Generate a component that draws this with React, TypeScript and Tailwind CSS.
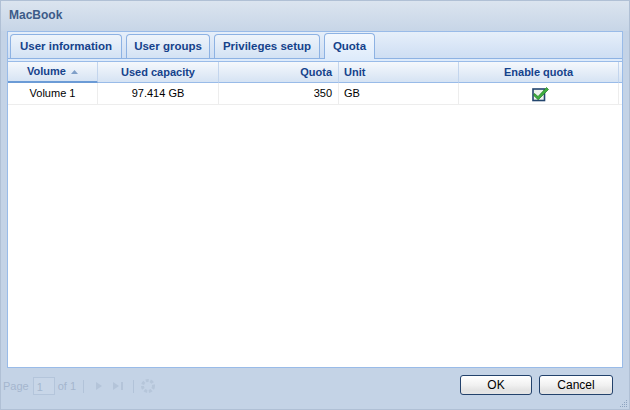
import React from 'react';

const tabs = [
  { label: 'User information', w: 'w-[112px]' },
  { label: 'User groups', w: 'w-[84px]' },
  { label: 'Privileges setup', w: 'w-[106px]' },
];

function CheckIcon() {
  return (
    <svg width="17" height="16" viewBox="0 0 17 16" className="block">
      <rect x="1" y="3" width="11.5" height="11.5" fill="#eef3ee" stroke="#23456e" strokeWidth="1.6" />
      <path d="M2.5 7.5 L6 10.5 L14.5 1.5 L16.5 3.5 L6.2 13.8 L1.5 9.3 Z" fill="#3fae3f" stroke="#1e7a1e" strokeWidth="0.7" strokeLinejoin="round" />
    </svg>
  );
}

function GridHeader() {
  return (
    <div className="flex h-[21px] text-[11px] font-bold text-[#15428b] bg-gradient-to-b from-[#f5f8fc] to-[#d4e2f3]">
      <div className="w-[90px] flex items-center justify-center gap-[5px] border-b-2 border-[#6b9bd6] border-r border-r-[#c3d5ed]">
        <span>Volume</span>
        <svg width="7" height="4" viewBox="0 0 7 4"><path d="M0 4 L3.5 0 L7 4 Z" fill="#7f9fc8" /></svg>
      </div>
      <div className="w-[121px] flex items-center justify-center border-b border-[#99bbe8] border-r border-r-[#c3d5ed]">Used capacity</div>
      <div className="w-[120px] flex items-center justify-end pr-[6px] border-b border-[#99bbe8] border-r border-r-[#c3d5ed]">Quota</div>
      <div className="w-[120px] flex items-center pl-[5px] border-b border-[#99bbe8] border-r border-r-[#c3d5ed]">Unit</div>
      <div className="w-[160px] flex items-center justify-center border-b border-[#99bbe8] border-r border-r-[#c3d5ed]">Enable quota</div>
      <div className="flex-1 border-b border-[#99bbe8]" />
    </div>
  );
}

function GridRow() {
  return (
    <div className="flex h-[22px] text-[11px] text-black border-b border-[#ededed]">
      <div className="w-[90px] flex items-center justify-center border-r border-[#ededed]">Volume 1</div>
      <div className="w-[121px] flex items-center justify-center border-r border-[#ededed]">97.414 GB</div>
      <div className="w-[120px] flex items-center justify-end pr-[6px] border-r border-[#ededed]">350</div>
      <div className="w-[120px] flex items-center pl-[5px] border-r border-[#ededed]">GB</div>
      <div className="w-[160px] flex items-center justify-center pl-[4px] border-r border-[#ededed]">
        <CheckIcon />
      </div>
      <div className="flex-1" />
    </div>
  );
}

function Pager() {
  return (
    <div className="flex items-center h-[20px] text-[11px] text-[#a4b6ce]">
      <span>Page</span>
      <div className="ml-[4px] w-[22px] h-[18px] border border-[#b4c5db] bg-[#c8d6e8] pl-[3px] pt-[2px] leading-[14px]">1</div>
      <span className="ml-[3px]">of 1</span>
      <div className="ml-[7px] w-px h-[13px] bg-[#b2c3d9]" />
      <svg className="ml-[10px]" width="10" height="10" viewBox="0 0 10 10"><path d="M2 1 L8 5 L2 9 Z" fill="#b4c4d9" /></svg>
      <svg className="ml-[8px]" width="12" height="10" viewBox="0 0 12 10"><path d="M1 1 L7 5 L1 9 Z" fill="#b4c4d9" /><rect x="9" y="1" width="2" height="8" fill="#b4c4d9" /></svg>
      <div className="ml-[9px] w-px h-[13px] bg-[#b2c3d9]" />
      <svg className="ml-[6px]" width="16" height="16" viewBox="0 0 16 16">
        <circle cx="8" cy="8" r="5.5" fill="none" stroke="#b6c6da" strokeWidth="3" strokeDasharray="3 1.6" />
      </svg>
    </div>
  );
}

function Button({ label, w }: { label: string; w: string }) {
  return (
    <div className={`${w} h-[20px] rounded-[3px] border border-[#23426c] bg-gradient-to-b from-[#ffffff] via-[#f1f1f1] to-[#d9d9d9] flex items-center justify-center text-[12px] text-black shadow-[inset_0_-3px_0_#e4e4e4]`}>
      {label}
    </div>
  );
}

export default function App() {
  return (
    <div
      className="relative w-[630px] h-[410px] overflow-hidden bg-[#c4d3e6] border border-[#b0c0d5] flex flex-col"
      style={{ fontFamily: '"Liberation Sans", Arial, sans-serif' }}
    >
      <div className="h-[30px] flex items-center pl-[8px] pb-[2px] text-[12px] font-bold text-[#3d5b88] bg-gradient-to-b from-[#dbe4ef] to-[#c7d5e7]">
        MacBook
      </div>
      <div className="px-[6px]">
        <div className="h-[337px] border border-[#99bbe8] bg-white flex flex-col">
          <div className="h-[27px] flex items-end gap-[4px] pl-[2px] bg-gradient-to-b from-[#e6effa] to-[#cedef3] border-b border-[#8db2e3]">
            {tabs.map((t) => (
              <div
                key={t.label}
                className={`${t.w} h-[24px] rounded-t-[4px] border border-b-0 border-[#8db2e3] bg-gradient-to-b from-[#eef4fb] to-[#d3e2f4] flex items-center justify-center text-[11.5px] font-bold text-[#15428b]`}
              >
                {t.label}
              </div>
            ))}
            <div className="relative -mb-px w-[51px] h-[26px] rounded-t-[4px] border border-b-0 border-[#8db2e3] bg-gradient-to-b from-[#f3f8fe] to-[#deebfb] flex items-center justify-center text-[11.5px] font-bold text-[#15428b]">
              Quota
            </div>
          </div>
          <div className="h-[3px] bg-[#deebfb] border-b border-[#99bbe8]" />
          <GridHeader />
          <GridRow />
          <div className="flex-1" />
        </div>
      </div>
      <div className="flex-1 flex items-start pl-[2px] pr-[16px] pt-[7px]">
        <div className="pt-[1px]">
          <Pager />
        </div>
        <div className="flex-1" />
        <div className="flex gap-[7px]">
          <Button label="OK" w="w-[72px]" />
          <Button label="Cancel" w="w-[74px]" />
        </div>
      </div>
      <svg className="absolute right-[1px] bottom-[1px]" width="9" height="9" viewBox="0 0 9 9">
        <g fill="#8ea4c0">
          <rect x="7" y="1" width="1" height="1" />
          <rect x="5" y="3" width="1" height="1" />
          <rect x="7" y="3" width="1" height="1" />
          <rect x="3" y="5" width="1" height="1" />
          <rect x="5" y="5" width="1" height="1" />
          <rect x="7" y="5" width="1" height="1" />
          <rect x="1" y="7" width="1" height="1" />
          <rect x="3" y="7" width="1" height="1" />
          <rect x="5" y="7" width="1" height="1" />
          <rect x="7" y="7" width="1" height="1" />
        </g>
      </svg>
    </div>
  );
}
